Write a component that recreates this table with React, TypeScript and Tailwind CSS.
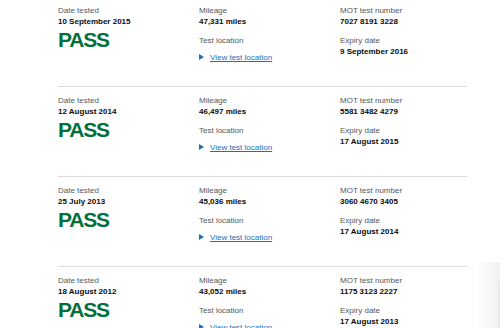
import React from "react";

type MotTest = {
  date: string;
  mileage: string;
  number: string;
  expiry: string;
};

const tests: MotTest[] = [
  { date: "10 September 2015", mileage: "47,331 miles", number: "7027 8191 3228", expiry: "9 September 2016" },
  { date: "12 August 2014", mileage: "46,497 miles", number: "5581 3482 4279", expiry: "17 August 2015" },
  { date: "25 July 2013", mileage: "45,036 miles", number: "3060 4670 3405", expiry: "17 August 2014" },
  { date: "18 August 2012", mileage: "43,052 miles", number: "1175 3123 2227", expiry: "17 August 2013" },
];

const Label = ({ children, className = "" }: { children: React.ReactNode; className?: string }) => (
  <div className={`text-[8px] leading-[11px] text-[#505a5f] ${className}`}>{children}</div>
);

const Value = ({ children }: { children: React.ReactNode }) => (
  <div className="text-[8px] leading-[11px] font-bold text-[#0b0c0c]">{children}</div>
);

const TestRow: React.FC<{ test: MotTest }> = ({ test }) => {
  return (
    <div className="h-[90px] border-t border-[#dcdcdc] pt-[8px] grid grid-cols-[141px_141px_1fr]">
      <div>
        <Label>Date tested</Label>
        <Value>{test.date}</Value>
        <div className="text-[21px] leading-[25px] font-bold tracking-[-1.2px] text-[#00703c]">PASS</div>
      </div>
      <div>
        <Label>Mileage</Label>
        <Value>{test.mileage}</Value>
        <Label className="mt-[7.5px]">Test location</Label>
        <div className="mt-[6px] flex items-center h-[11px]">
          <svg width="5" height="6" viewBox="0 0 5 6" className="mr-[6px]">
            <path d="M0 0 L5 3 L0 6 Z" fill="#1d70b8" />
          </svg>
          <a href="#" className="text-[8px] leading-[11px] text-[#1d70b8] underline underline-offset-1">
            View test location
          </a>
        </div>
      </div>
      <div>
        <Label>MOT test number</Label>
        <Value>{test.number}</Value>
        <Label className="mt-[7.5px]">Expiry date</Label>
        <Value>{test.expiry}</Value>
      </div>
    </div>
  );
};

export default function App() {
  return (
    <div
      className="relative w-[500px] h-[328px] overflow-hidden bg-white"
      style={{ fontFamily: '"Liberation Sans", Arial, sans-serif' }}
    >
      <div className="ml-[58px] w-[409px] -mt-[4px]">
        {tests.map((t) => (
          <TestRow key={t.number} test={t} />
        ))}
      </div>
      <div className="absolute right-0 top-[262px] bottom-0 w-[24px] bg-gradient-to-r from-transparent to-black/[0.06]" />
      <div className="absolute right-0 top-[283px] bottom-0 w-px bg-[#e4e4e4]" />
    </div>
  );
}
